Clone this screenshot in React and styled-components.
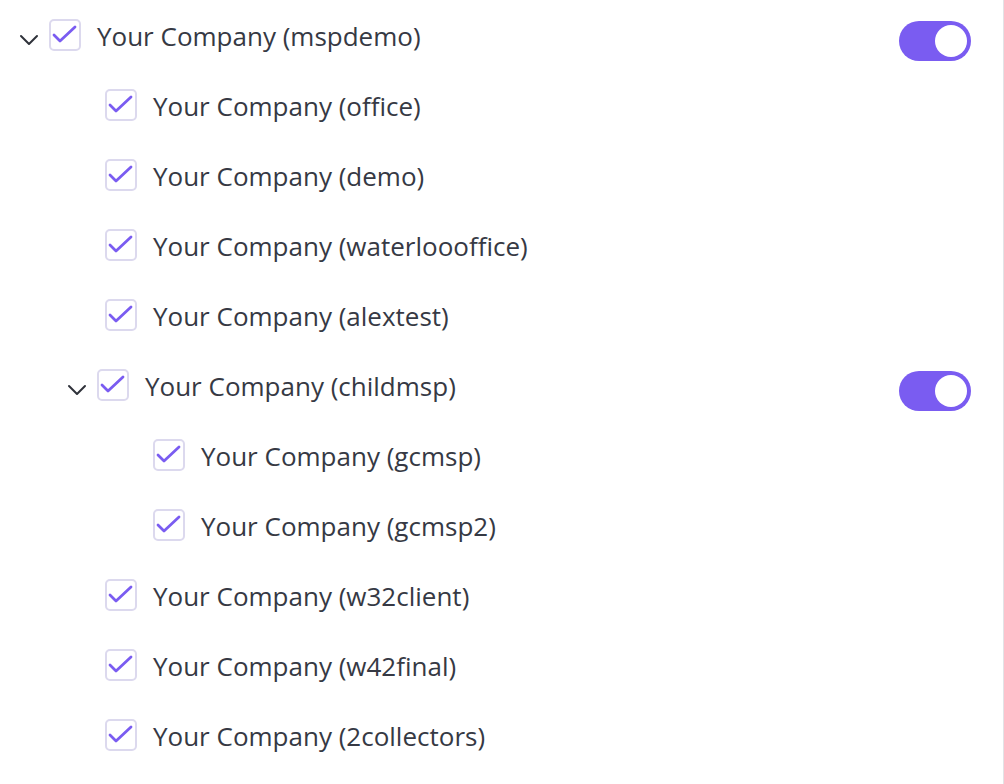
import styled, { createGlobalStyle } from "styled-components";
import { useState } from "react";

const GlobalStyle = createGlobalStyle`
    * { box-sizing: border-box; }
    body {
        margin: 0;
        background: #fff;
        font-family: "Open Sans", "Noto Sans", sans-serif;
        color: #363944;
    }
`

const Painel = styled.div`
    width: 100%;
    min-height: 100vh;
    border-right: 1px solid #e3e3e6;
`

const Linha = styled.div`
    display: flex;
    align-items: center;
    height: 70px;
    padding-left: ${props => 19 + props.$nivel * 48}px;
    padding-right: 32px;
`

const Seta = styled.button`
    display: flex;
    align-items: center;
    justify-content: center;
    width: 20px;
    height: 12px;
    margin: 9px 10px 0 0;
    padding: 0;
    border: none;
    background: none;
    cursor: pointer;
    color: #2f323a;
`

const Espaco = styled.span`
    width: 38px;
    flex-shrink: 0;
`

const Caixa = styled.span`
    display: flex;
    align-items: center;
    justify-content: center;
    width: 32px;
    height: 32px;
    flex-shrink: 0;
    border: 2px solid #dcd9ee;
    border-radius: 5px;
    background: #fff;
    cursor: pointer;
`

const Rotulo = styled.span`
    margin-left: 16px;
    font-size: 26px;
    line-height: 34px;
    margin-top: 2px;
    white-space: nowrap;
`

const Chave = styled.button`
    position: relative;
    margin-left: auto;
    margin-top: 12px;
    width: 72px;
    height: 40px;
    padding: 0;
    border: none;
    border-radius: 20px;
    background: ${props => props.$ligado ? "#7a5cf1" : "#d4d2dc"};
    cursor: pointer;

    &::after {
        content: "";
        position: absolute;
        top: 4px;
        left: ${props => props.$ligado ? "36px" : "4px"};
        width: 32px;
        height: 32px;
        border-radius: 50%;
        background: #fff;
    }
`

const arvore = {
    nome: "mspdemo",
    filhos: [
        { nome: "office" },
        { nome: "demo" },
        { nome: "waterloooffice" },
        { nome: "alextest" },
        {
            nome: "childmsp",
            filhos: [
                { nome: "gcmsp" },
                { nome: "gcmsp2" },
            ],
        },
        { nome: "w32client" },
        { nome: "w42final" },
        { nome: "2collectors" },
    ],
}

function Visto() {
    return (
        <svg width="28" height="28" viewBox="0 0 28 28" fill="none">
            <polyline points="3,14 9,20 24,6" stroke="#7a5cf1" strokeWidth="2.8" strokeLinecap="round" strokeLinejoin="round" />
        </svg>
    )
}

function Chevron() {
    return (
        <svg width="20" height="12" viewBox="0 0 20 12" fill="none">
            <polyline points="2,2 10,10 18,2" stroke="currentColor" strokeWidth="2" strokeLinecap="round" strokeLinejoin="round" />
        </svg>
    )
}

function No({ item, nivel }) {
    const [aberto, setAberto] = useState(true)
    const [marcado, setMarcado] = useState(true)
    const [ligado, setLigado] = useState(true)
    const temFilhos = !!item.filhos

    return (
        <>
            <Linha $nivel={nivel}>
                {temFilhos
                    ? <Seta onClick={() => setAberto(!aberto)}><Chevron /></Seta>
                    : <Espaco />}
                <Caixa onClick={() => setMarcado(!marcado)}>
                    {marcado && <Visto />}
                </Caixa>
                <Rotulo>Your Company ({item.nome})</Rotulo>
                {temFilhos && <Chave $ligado={ligado} onClick={() => setLigado(!ligado)} />}
            </Linha>
            {temFilhos && aberto && item.filhos.map(filho => (
                <No key={filho.nome} item={filho} nivel={nivel + 1} />
            ))}
        </>
    )
}

export default function App() {
    return (
        <>
            <GlobalStyle />
            <Painel>
                <No item={arvore} nivel={0} />
            </Painel>
        </>
    )
}
